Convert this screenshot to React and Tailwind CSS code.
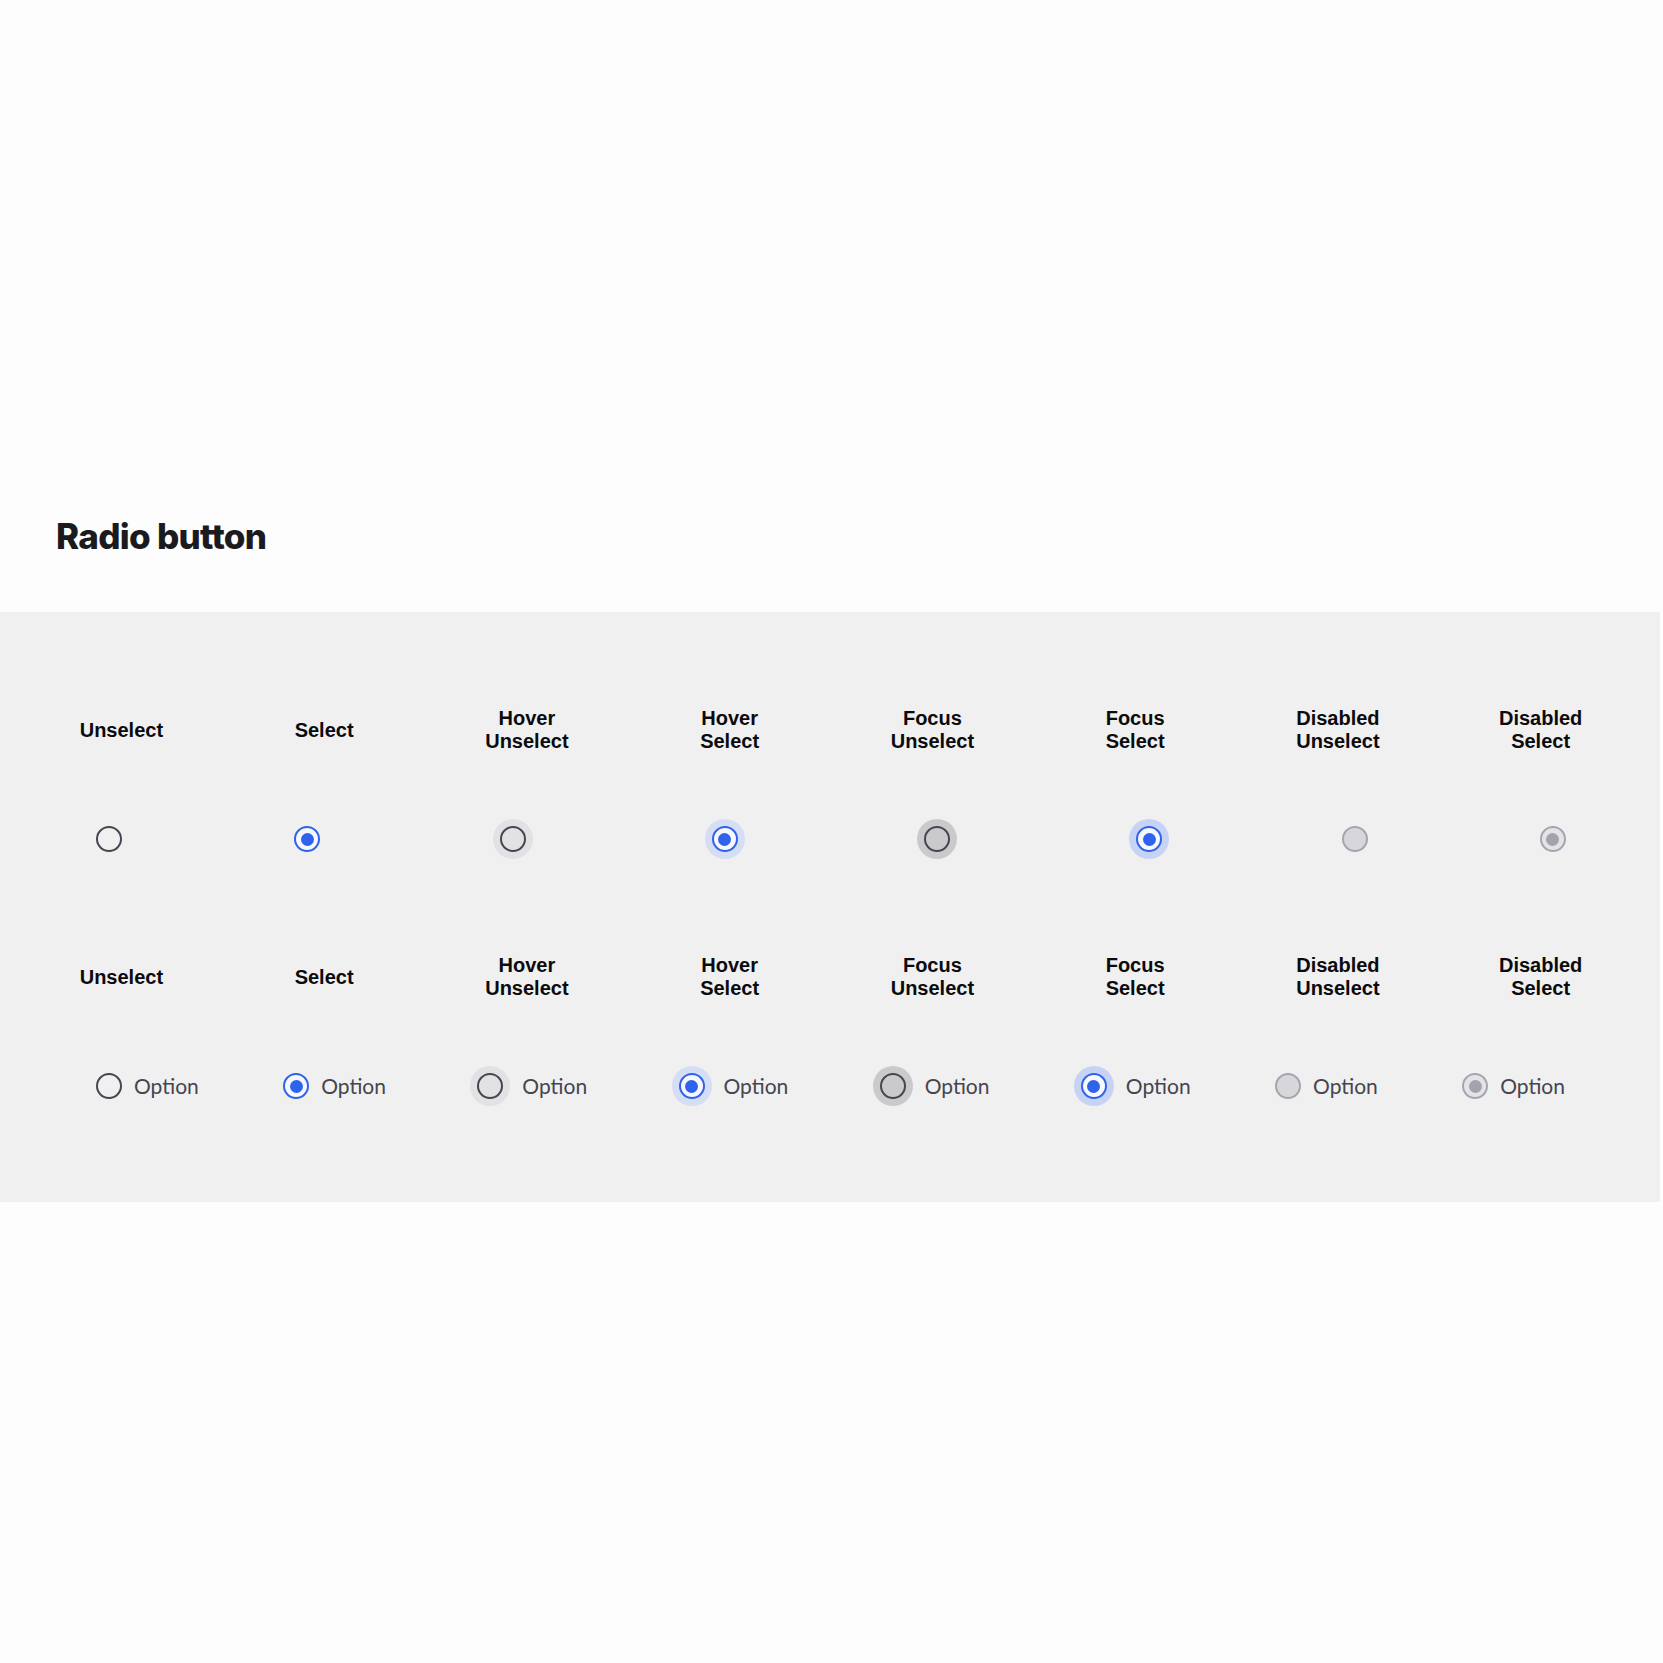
const states = [
  { id: 'unselect', label: ['Unselect'] },
  { id: 'select', label: ['Select'] },
  { id: 'hover-unselect', label: ['Hover', 'Unselect'] },
  { id: 'hover-select', label: ['Hover', 'Select'] },
  { id: 'focus-unselect', label: ['Focus', 'Unselect'] },
  { id: 'focus-select', label: ['Focus', 'Select'] },
  { id: 'disabled-unselect', label: ['Disabled', 'Unselect'] },
  { id: 'disabled-select', label: ['Disabled', 'Select'] },
]

function Dot({ state }) {
  const checked = state.endsWith('-select') || state === 'select'
  const disabled = state.startsWith('disabled')

  const ring = disabled
    ? 'border-[#a5a5b0]'
    : checked
      ? 'border-[#2f63ec]'
      : 'border-[#464651]'

  const fill = disabled
    ? checked ? 'bg-[#e4e4e8]' : 'bg-[#d7d7db]'
    : checked
      ? 'bg-[#f7f8fd]'
      : state === 'hover-unselect'
        ? 'bg-[#e2e2e5]'
        : state === 'focus-unselect'
          ? 'bg-[#cacacd]'
          : 'bg-transparent'

  return (
    <span className={`flex items-center justify-center w-[26px] h-[26px] rounded-full border-[2.5px] ${ring} ${fill}`}>
      {checked && (
        <span className={`w-[13px] h-[13px] rounded-full ${disabled ? 'bg-[#a3a3ae]' : 'bg-[#2f63ec]'}`} />
      )}
    </span>
  )
}

function Radio({ state }) {
  const halo = {
    'hover-unselect': 'bg-[#e2e2e5]',
    'hover-select': 'bg-[#d6def5]',
    'focus-unselect': 'bg-[#cacacd]',
    'focus-select': 'bg-[#c6d3f4]',
  }[state]

  if (!halo) return <Dot state={state} />

  return (
    <span className={`flex items-center justify-center w-10 h-10 rounded-full ${halo}`}>
      <Dot state={state} />
    </span>
  )
}

function LabelRow() {
  return (
    <div className="grid grid-cols-8 pl-5 pr-[18px]">
      {states.map(s => (
        <div key={s.id} className="h-[46px] flex flex-col items-center justify-center text-center font-['Liberation_Sans',Arial,sans-serif] font-bold text-[20px] leading-[23px] text-[#0b0b0d]">
          {s.label.map(line => <span key={line}>{line}</span>)}
        </div>
      ))}
    </div>
  )
}

export default function App() {
  return (
    <div className="min-h-screen bg-[#fdfdfd] pt-[514px]">
      <h1 className="px-[56px] font-['Inter',sans-serif] font-extrabold text-[35px] leading-[44px] tracking-[-0.02em] text-[#1b1b1f]">
        Radio button
      </h1>

      <div className="mt-[54px] mr-[3px] bg-[#f0f0f0] pt-[95px] pb-[96px]">
        {/* Bare radios */}
        <LabelRow />
        <div className="mt-[66px] h-10 flex items-center justify-between pl-[96px] pr-[94px]">
          {states.map(s => <Radio key={s.id} state={s.id} />)}
        </div>

        {/* Radios with label */}
        <div className="mt-[95px]">
          <LabelRow />
        </div>
        <div className="mt-[66px] h-10 flex items-center justify-between pl-[96px] pr-[95px]">
          {states.map(s => (
            <label key={s.id} className="flex items-center gap-3">
              <Radio state={s.id} />
              <span className="font-['Lato',sans-serif] text-[21px] text-[#45454f]">Option</span>
            </label>
          ))}
        </div>
      </div>
    </div>
  )
}
